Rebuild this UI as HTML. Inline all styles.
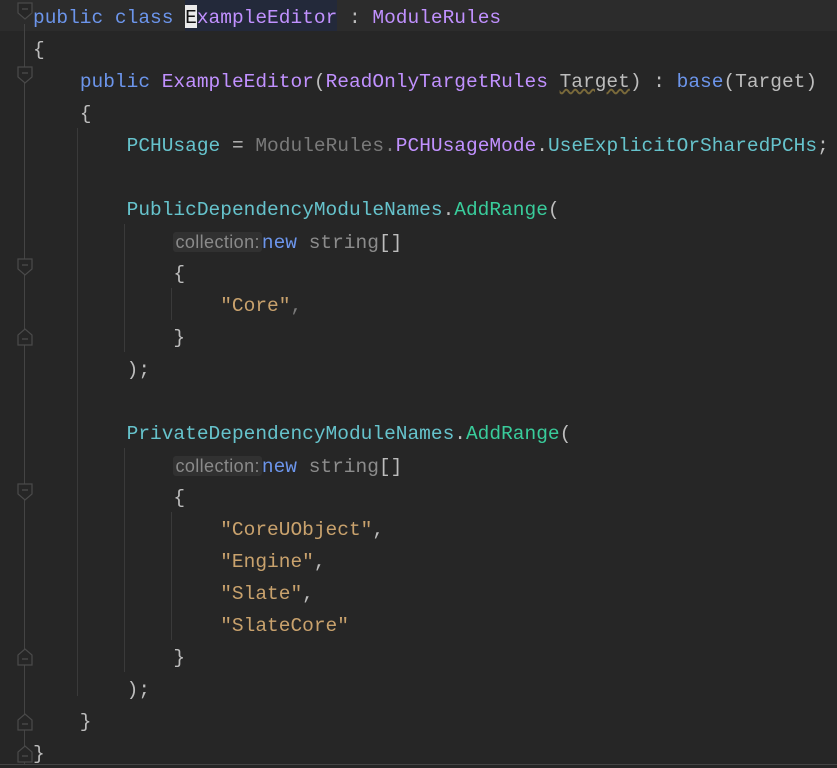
<!DOCTYPE html>
<html><head><style>
html,body{margin:0;padding:0;background:#262626;width:837px;height:768px;overflow:hidden;position:relative}
.l{position:absolute;left:33px;height:32px;line-height:32px;margin-top:2px;font-family:"Liberation Mono",monospace;font-size:19.5px;white-space:pre;color:#bdbdbd}
.k{color:#6c95eb}.c{color:#c191ff}.t{color:#66c3cc}.s{color:#c9a26d}.g{color:#7a7a7a}.m{color:#39cc9b}.p{color:#bdbdbd}.st{color:#8c8c8c}
.hint{font-family:"Liberation Sans",sans-serif;font-size:18px;color:#8a8a8a;background:#313131;border-radius:3px;padding:0 2px 0 2px;letter-spacing:0.4px}
.cur{position:absolute;left:0;top:0;width:837px;height:31px;background:#2c2c2c}
.v{position:absolute;width:1px;background:#3a3a3a}
</style></head><body>
<div class="cur"></div>
<div style="position:absolute;left:185px;top:0;width:152px;height:31px;background:#23293a"></div>
<div style="position:absolute;left:185px;top:5px;width:12px;height:23px;background:#eaeaea"></div>
<div class="v" style="left:24px;top:24px;height:740px;background:#444"></div>
<div class="v" style="left:77px;top:128px;height:568px"></div>
<div class="v" style="left:124px;top:224px;height:128px"></div>
<div class="v" style="left:124px;top:448px;height:224px"></div>
<div class="v" style="left:171px;top:288px;height:32px"></div>
<div class="v" style="left:171px;top:512px;height:128px"></div>
<svg style="position:absolute;left:0;top:0" width="40" height="768">
<g fill="#262626" stroke="#4a4a4a" stroke-width="1.2">
<path d="M18 3h14v10l-7 6l-7-6z"/><path d="M18 67h14v10l-7 6l-7-6z"/>
<path d="M18 259h14v10l-7 6l-7-6z"/><path d="M18 484h14v10l-7 6l-7-6z"/>
<path d="M18 345h14v-10l-7-6l-7 6z"/><path d="M18 665h14v-10l-7-6l-7 6z"/>
<path d="M18 730h14v-10l-7-6l-7 6z"/><path d="M18 762h14v-10l-7-6l-7 6z"/>
</g>
<g stroke="#555" stroke-width="1"><path d="M22 9h6M22 73h6M22 265h6M22 490h6M22 339h6M22 659h6M22 724h6M22 756h6"/></g>
</svg>
<div style="position:absolute;left:0;top:764px;width:837px;height:1px;background:#444"></div>

<div class="l" style="top:0"><span class="k">public class</span> <span class="c"><span style="color:#111">E</span>xampleEditor</span> : <span class="c">ModuleRules</span></div>
<div class="l" style="top:32px">{</div>
<div class="l" style="top:64px">    <span class="k">public</span> <span class="c">ExampleEditor</span>(<span class="c">ReadOnlyTargetRules</span> <span style="text-decoration:underline wavy #7a6a3a">Target</span>) : <span class="k">base</span>(Target)</div>
<div class="l" style="top:96px">    {</div>
<div class="l" style="top:128px">        <span class="t">PCHUsage</span> = <span class="g">ModuleRules.</span><span class="c">PCHUsageMode</span>.<span class="t">UseExplicitOrSharedPCHs</span>;</div>
<div class="l" style="top:192px">        <span class="t">PublicDependencyModuleNames</span>.<span class="m">AddRange</span>(</div>
<div class="l" style="top:224px">            <span class="hint">collection:</span><span class="k">new</span> <span class="st">string</span>[]</div>
<div class="l" style="top:256px">            {</div>
<div class="l" style="top:288px">                <span class="s">"Core"</span><span class="g">,</span></div>
<div class="l" style="top:320px">            }</div>
<div class="l" style="top:352px">        );</div>
<div class="l" style="top:416px">        <span class="t">PrivateDependencyModuleNames</span>.<span class="m">AddRange</span>(</div>
<div class="l" style="top:448px">            <span class="hint">collection:</span><span class="k">new</span> <span class="st">string</span>[]</div>
<div class="l" style="top:480px">            {</div>
<div class="l" style="top:512px">                <span class="s">"CoreUObject"</span>,</div>
<div class="l" style="top:544px">                <span class="s">"Engine"</span>,</div>
<div class="l" style="top:576px">                <span class="s">"Slate"</span>,</div>
<div class="l" style="top:608px">                <span class="s">"SlateCore"</span></div>
<div class="l" style="top:640px">            }</div>
<div class="l" style="top:672px">        );</div>
<div class="l" style="top:704px">    }</div>
<div class="l" style="top:736px">}</div>
</body></html>
